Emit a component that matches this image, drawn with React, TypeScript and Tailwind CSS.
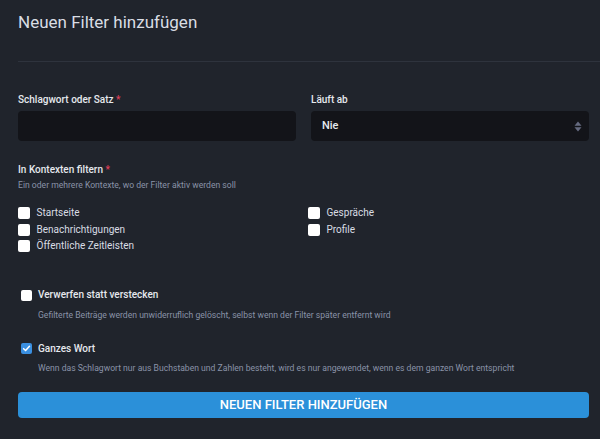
import React from "react";

function Box({ checked = false }: { checked?: boolean }) {
  return checked ? (
    <span className="flex h-[11px] w-[11px] shrink-0 items-center justify-center rounded-[2px] bg-[#3a8fe0]">
      <svg width="9" height="9" viewBox="0 0 10 10" fill="none">
        <path d="M1.8 5.2 L4 7.3 L8.3 2.6" stroke="white" strokeWidth="1.7" strokeLinecap="round" strokeLinejoin="round" />
      </svg>
    </span>
  ) : (
    <span className="block h-[11px] w-[11px] shrink-0 rounded-[2px] bg-white" />
  );
}

function Check({ label }: { label: string }) {
  return (
    <div className="flex h-[16.5px] items-center gap-[6.5px]">
      <span className="block h-[12px] w-[12px] shrink-0 rounded-[2px] bg-white" />
      <span className="text-[10px] leading-[12px] text-[#d9dde4]">{label}</span>
    </div>
  );
}

export default function App() {
  return (
    <div className="h-[439px] w-[600px] overflow-hidden bg-[#20242c] font-['Roboto',sans-serif]">
      <div className="pl-[18px]">
        <h1 className="pt-[11px] text-[17px] leading-[22px] text-[#d9dde4]">Neuen Filter hinzufügen</h1>
        <div className="mt-[28px] h-px bg-[#2e333d]" />
      </div>
      <div className="pl-[18px] pr-[11px]">
        <div className="mt-[31px] flex gap-[15px]">
          <div className="flex-1">
            <div className="text-[10px] font-medium leading-[14px] text-[#e6e9ee]">
              Schlagwort oder Satz <span className="text-[#df405a]">*</span>
            </div>
            <div className="mt-[4px] h-[30px] rounded-[4px] bg-[#131419]" />
          </div>
          <div className="flex-1">
            <div className="text-[10px] font-medium leading-[14px] text-[#e6e9ee]">Läuft ab</div>
            <div className="mt-[4px] flex h-[30px] items-center justify-between rounded-[4px] bg-[#131419] pl-[11px] pr-[7px]">
              <span className="text-[11px] font-medium text-[#e6e9ee]">Nie</span>
              <svg width="8" height="11" viewBox="0 0 8 11">
                <path d="M4 0.5 L7.5 4.7 L0.5 4.7 Z" fill="#666b80" />
                <path d="M4 10.5 L7.5 6.3 L0.5 6.3 Z" fill="#666b80" />
              </svg>
            </div>
          </div>
        </div>

        <div className="mt-[22px] text-[10px] font-medium leading-[14px] text-[#e6e9ee]">
          In Kontexten filtern <span className="text-[#df405a]">*</span>
        </div>
        <div className="mt-[2px] text-[8.6px] leading-[12px] text-[#8a93a8]">
          Ein oder mehrere Kontexte, wo der Filter aktiv werden soll
        </div>
        <div className="mt-[14px] flex">
          <div className="w-[290px]">
            <Check label="Startseite" />
            <Check label="Benachrichtigungen" />
            <Check label="Öffentliche Zeitleisten" />
          </div>
          <div className="flex-1">
            <Check label="Gespräche" />
            <Check label="Profile" />
          </div>
        </div>

        <div className="mt-[33.5px] flex h-[14px] items-center gap-[6px] pl-[3px]">
          <Box />
          <span className="text-[10px] font-medium leading-[14px] text-[#e6e9ee]">Verwerfen statt verstecken</span>
        </div>
        <div className="mt-[7px] pl-[20px] text-[8.6px] leading-[12px] text-[#8a93a8]">
          Gefilterte Beiträge werden unwiderruflich gelöscht, selbst wenn der Filter später entfernt wird
        </div>

        <div className="mt-[20.5px] flex h-[14px] items-center gap-[6px] pl-[3px]">
          <Box checked />
          <span className="text-[10px] font-medium leading-[14px] text-[#e6e9ee]">Ganzes Wort</span>
        </div>
        <div className="mt-[6px] pl-[20px] text-[8.6px] leading-[12px] text-[#8a93a8]">
          Wenn das Schlagwort nur aus Buchstaben und Zahlen besteht, wird es nur angewendet, wenn es dem ganzen Wort entspricht
        </div>

        <button className="mt-[18.5px] flex h-[26px] w-full items-center justify-center rounded-[4px] bg-[#2b90d9] text-[13px] font-medium uppercase text-white">
          Neuen Filter hinzufügen
        </button>
      </div>
    </div>
  );
}
